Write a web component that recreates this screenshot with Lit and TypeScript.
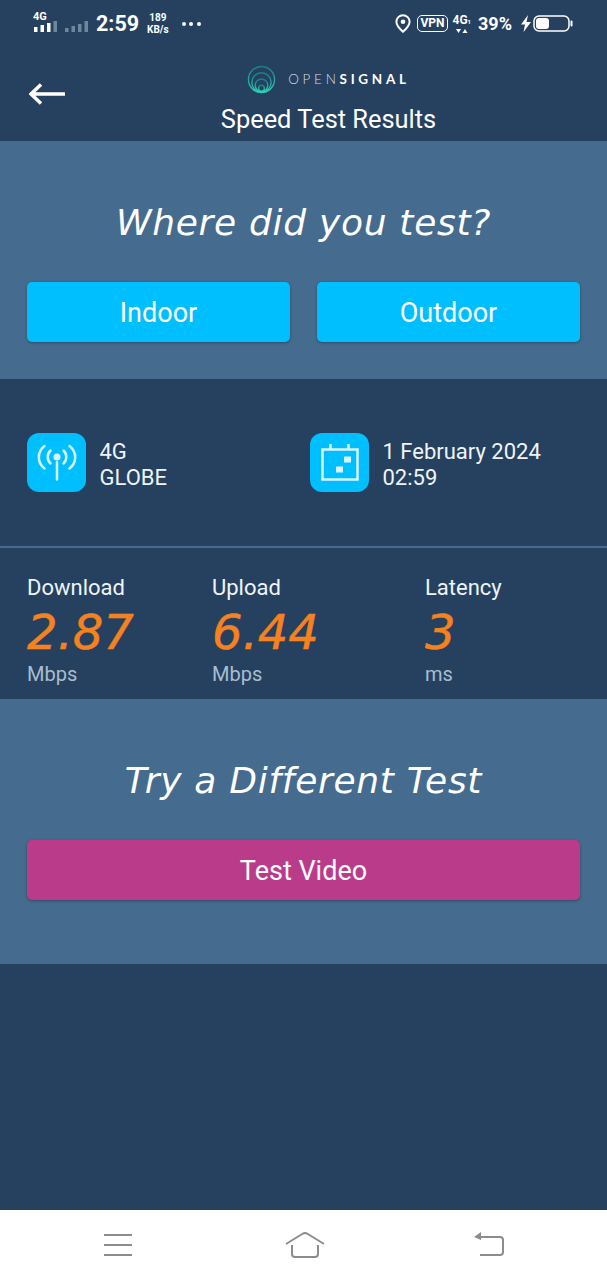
import { LitElement, html, css, svg } from "lit";
import { customElement } from "lit/decorators.js";

const stats = [
  { label: "Download", value: "2.87", unit: "Mbps", width: 185 },
  { label: "Upload", value: "6.44", unit: "Mbps", width: 213 },
  { label: "Latency", value: "3", unit: "ms", width: 150 },
];

const signalBars = (heights: number[], color: string) =>
  heights.map(
    (h, i) => svg`<rect x=${i * 6.5} y=${11 - h} width="3.500" height=${h} fill=${color}></rect>`
  );

@customElement("app-root")
export class AppRoot extends LitElement {
  static styles = css`
    :host {
      display: block;
      width: 607px;
      height: 1280px;
      background: #25415f;
      font-family: Roboto, "Liberation Sans", sans-serif;
      color: #fff;
    }
    .page {
      display: flex;
      flex-direction: column;
      height: 1280px;
    }
    .status {
      height: 46px;
      box-sizing: border-box;
      padding: 1px 34px 0 33px;
      display: flex;
      align-items: center;
      justify-content: space-between;
    }
    .status-side {
      display: flex;
      align-items: center;
    }
    .net {
      display: flex;
      flex-direction: column;
      width: 30px;
      font-size: 11px;
      font-weight: 700;
      line-height: 9px;
      margin-top: -3px;
    }
    .net svg {
      display: block;
      margin: 0 0 0 1px;
      flex: none;
    }
    .clock {
      font-size: 21.500px;
      font-weight: 700;
      margin-left: 33px;
      line-height: 24px;
    }
    .speed {
      font-size: 10px;
      font-weight: 700;
      line-height: 12px;
      text-align: center;
      margin-left: 8px;
    }
    .dots {
      display: flex;
      gap: 3.500px;
      margin-left: 13px;
    }
    .dots i {
      width: 4px;
      height: 4px;
      border-radius: 50%;
      background: #fff;
    }
    .vpn {
      border: 1.500px solid #fff;
      border-radius: 5px;
      font-size: 12px;
      font-weight: 700;
      line-height: 15px;
      padding: 0 2px;
      margin-left: 6px;
    }
    .fourg {
      font-size: 12px;
      font-weight: 700;
      line-height: 12px;
      margin-left: 5px;
      text-align: center;
    }
    .fourg small {
      font-size: 6px;
    }
    .fourg svg {
      display: block;
      margin: 0 auto;
    }
    .percent {
      font-size: 18px;
      font-weight: 700;
      margin-left: 7px;
    }
    .bolt {
      margin-left: 8px;
    }
    .battery {
      margin-left: 1px;
    }
    .topbar {
      height: 95px;
      box-sizing: border-box;
      position: relative;
      display: flex;
      flex-direction: column;
      align-items: center;
      padding: 18px 0 0 50px;
    }
    .back {
      position: absolute;
      left: 29px;
      top: 35px;
    }
    .brand {
      display: flex;
      align-items: center;
      gap: 12px;
      height: 30px;
      font-family: Lato, sans-serif;
      font-size: 13.500px;
      letter-spacing: 3.700px;
      font-weight: 300;
      color: #d5dfe8;
    }
    .brand b {
      font-weight: 700;
      color: #fff;
    }
    .title {
      font-size: 25.400px;
      line-height: 30px;
      margin-top: 10px;
    }
    .panel {
      background: #456b8e;
      box-sizing: border-box;
      padding: 0 27px;
    }
    .where {
      height: 238px;
      padding-top: 59px;
    }
    .heading {
      font-family: "DejaVu Sans", sans-serif;
      font-style: italic;
      font-weight: 400;
      font-size: 36px;
      letter-spacing: 0.700px;
      line-height: 46px;
      text-align: center;
      white-space: nowrap;
    }
    .choices {
      display: grid;
      grid-template-columns: 263px 263px;
      justify-content: space-between;
      margin-top: 36px;
    }
    button {
      display: block;
      width: 100%;
      height: 60px;
      padding: 1px 0 0;
      border: none;
      border-radius: 5px;
      background: #00bfff;
      color: #fff;
      font-family: inherit;
      font-size: 27px;
      box-shadow: 0 1px 3px rgba(0, 0, 0, 0.3);
    }
    .info {
      height: 169px;
      box-sizing: border-box;
      padding: 54px 27px 0;
      display: flex;
      border-bottom: 2px solid #456b8e;
    }
    .info-item {
      display: flex;
      gap: 13.500px;
      font-size: 22px;
      line-height: 26px;
      color: #eef4f8;
    }
    .info-item:first-child {
      width: 283px;
    }
    .info-text {
      padding-top: 6px;
    }
    .tile {
      width: 59px;
      height: 59px;
      border-radius: 12px;
      background: #00bfff;
      display: flex;
      align-items: center;
      justify-content: center;
    }
    .stats {
      height: 151px;
      box-sizing: border-box;
      padding: 27px 27px 0;
      display: flex;
    }
    .stat-label {
      font-size: 22px;
      line-height: 26px;
      color: #eef4f8;
    }
    .stat-value {
      font-family: "DejaVu Sans", sans-serif;
      font-style: italic;
      font-size: 48px;
      line-height: 54px;
      margin-top: 4px;
      color: #f5821f;
      -webkit-text-stroke: 0.500px #f5821f;
    }
    .stat-unit {
      font-size: 20px;
      line-height: 24px;
      margin-top: 3px;
      color: #a9bdd0;
    }
    .retry {
      height: 265px;
      padding-top: 59px;
    }
    .retry button {
      background: #bb3b8b;
      margin-top: 36px;
    }
    .fill {
      flex: 1;
    }
    .nav {
      height: 70px;
      background: #fff;
      display: grid;
      grid-template-columns: 104px 28px 153px 40px 149px 30px;
      padding-top: 19px;
      box-sizing: border-box;
    }
    .nav svg {
      display: block;
    }
    .nav .m {
      grid-column: 2;
      margin-top: 5px;
    }
    .nav .h {
      grid-column: 4;
      margin-top: 3px;
    }
    .nav .r {
      grid-column: 6;
      margin-top: 3px;
    }
  `;

  render() {
    return html`
      <div class="page">
        <div class="status">
          <div class="status-side">
            <div class="net">
              4G
              <svg width="60" height="11" viewBox="0 0 60 11">
                ${signalBars([5, 7, 9], "#fff")}
                ${svg`<g transform="translate(19.500 0)">${signalBars([11], "#6d879f")}</g>`}
                ${svg`<g transform="translate(31 0)">${signalBars([4, 6, 8, 11], "#6d879f")}</g>`}
              </svg>
            </div>
            <div class="clock">2:59</div>
            <div class="speed">189<br />KB/s</div>
            <div class="dots"><i></i><i></i><i></i></div>
          </div>
          <div class="status-side">
            <svg width="16" height="19" viewBox="0 0 16 19">
              <path d="M8 1.200a6.600 6.600 0 0 0-6.600 6.600C1.400 12 8 17.800 8 17.800s6.600-5.800 6.600-10A6.600 6.600 0 0 0 8 1.200z" fill="none" stroke="#fff" stroke-width="2"></path>
              <circle cx="8" cy="7.800" r="2.300" fill="#fff"></circle>
            </svg>
            <div class="vpn">VPN</div>
            <div class="fourg">
              4G<small>1</small>
              <svg width="12" height="6" viewBox="0 0 12 6">
                <path d="M0 1h5L2.500 5zM6.500 5h5L9 1z" fill="#fff"></path>
              </svg>
            </div>
            <div class="percent">39%</div>
            <svg class="bolt" width="12" height="17" viewBox="0 0 12 17">
              <path d="M8 0L1 9.500h4L3.500 17 11 7H6.500z" fill="#fff"></path>
            </svg>
            <svg class="battery" width="40" height="18" viewBox="0 0 40 18">
              <rect x="1" y="1" width="35" height="15" rx="5" fill="none" stroke="#fff" stroke-width="1.500"></rect>
              <rect x="3" y="3" width="13" height="11" rx="3" fill="#fff"></rect>
              <rect x="37.500" y="5.500" width="2" height="6" rx="1" fill="#fff"></rect>
            </svg>
          </div>
        </div>

        <div class="topbar">
          <svg class="back" width="38" height="26" viewBox="0 0 38 26">
            <path d="M36 13H3M12 3.500L2 13l10 9.500" fill="none" stroke="#fff" stroke-width="3.500"></path>
          </svg>
          <div class="brand">
            <svg width="29" height="29" viewBox="0 0 30 30" fill="none" stroke="url(#ring)" stroke-width="1.400">
              <defs>
                <linearGradient id="ring" x1="0" y1="0" x2="0" y2="1">
                  <stop offset="0" stop-color="#1a7f85"></stop>
                  <stop offset="1" stop-color="#2fd0b5"></stop>
                </linearGradient>
              </defs>
              <circle cx="15" cy="15" r="13.500"></circle>
              <circle cx="15" cy="18" r="10"></circle>
              <circle cx="15" cy="21" r="6.500"></circle>
              <circle cx="15" cy="24" r="3"></circle>
            </svg>
            <span>OPEN<b>SIGNAL</b></span>
          </div>
          <div class="title">Speed Test Results</div>
        </div>

        <section class="panel where">
          <div class="heading">Where did you test?</div>
          <div class="choices">
            <button>Indoor</button>
            <button>Outdoor</button>
          </div>
        </section>

        <section class="info">
          <div class="info-item">
            <div class="tile">
              <svg width="40" height="40" viewBox="0 0 40 40" fill="none" stroke="#d8f5ff" stroke-width="2.500" stroke-linecap="round">
                <circle cx="20" cy="14" r="3.500" fill="#d8f5ff" stroke="none"></circle>
                <path d="M20 19v17.500"></path>
                <path d="M13.500 7.500a9 9 0 0 0 0 13M26.500 7.500a9 9 0 0 1 0 13"></path>
                <path d="M7.500 3a14 14 0 0 0 0 22.500M32.500 3a14 14 0 0 1 0 22.500"></path>
              </svg>
            </div>
            <div class="info-text">4G<br />GLOBE</div>
          </div>
          <div class="info-item">
            <div class="tile">
              <svg width="38" height="40" viewBox="0 0 38 40" fill="none" stroke="#d8f5ff" stroke-width="2.500">
                <rect x="1.500" y="6.500" width="35" height="30"></rect>
                <path d="M9.500 1v5.500M27.500 1v5.500"></path>
                <rect x="23" y="13.500" width="7" height="6" fill="#d8f5ff" stroke="none"></rect>
                <rect x="15" y="23.500" width="7" height="6" fill="#d8f5ff" stroke="none"></rect>
              </svg>
            </div>
            <div class="info-text">1 February 2024<br />02:59</div>
          </div>
        </section>

        <section class="stats">
          ${stats.map(
            (s) => html`
              <div style="width:${s.width}px">
                <div class="stat-label">${s.label}</div>
                <div class="stat-value">${s.value}</div>
                <div class="stat-unit">${s.unit}</div>
              </div>
            `
          )}
        </section>

        <section class="panel retry">
          <div class="heading">Try a Different Test</div>
          <button>Test Video</button>
        </section>

        <div class="fill"></div>

        <nav class="nav">
          <svg class="m" width="28" height="22" viewBox="0 0 28 22" stroke="#8c8c8c" stroke-width="2">
            <path d="M0 1h28M0 11h28M0 21h28"></path>
          </svg>
          <svg class="h" width="40" height="26" viewBox="0 0 40 26" fill="none" stroke="#8c8c8c" stroke-width="2">
            <path d="M1 12L18 1.500q2-1 4 0L39 12"></path>
            <path d="M7 13v9q0 3 3 3h20q3 0 3-3v-9"></path>
          </svg>
          <svg class="r" width="30" height="24" viewBox="0 0 30 24" fill="none" stroke="#8c8c8c" stroke-width="2">
            <path d="M6 5h20q3 0 3 3v12q0 3-3 3H6"></path>
            <path d="M0 5L7 0v8z" fill="#8c8c8c" stroke="none"></path>
          </svg>
        </nav>
      </div>
    `;
  }
}
